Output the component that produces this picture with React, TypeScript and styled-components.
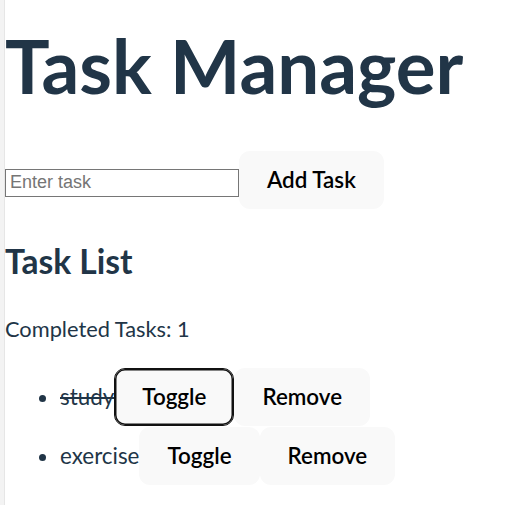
import React, { useState } from "react";
import styled, { createGlobalStyle } from "styled-components";

const GlobalStyle = createGlobalStyle`
  html, body { margin: 0; padding: 0; background: #ffffff; }
  body {
    font-family: Lato, "Open Sans", sans-serif;
    color: #213547;
  }
`;

const Page = styled.div`
  min-height: 100vh;
  box-sizing: border-box;
  border-left: 4px solid #f3f3f3;
  box-shadow: inset 1px 0 0 #e6e6e6;
  padding-left: 1px;
  padding-top: 26px;
`;

const Title = styled.h1`
  margin: 0;
  font-size: 74.5px;
  line-height: 79px;
  font-weight: 700;
  color: #213547;
`;

const Form = styled.div`
  display: flex;
  align-items: baseline;
  margin-top: 46px;
`;

const TaskInput = styled.input`
  box-sizing: border-box;
  width: 234px;
  height: 28px;
  margin: 0;
  padding: 1px 4px;
  border: 1px solid #767676;
  border-radius: 0;
  font-family: "Liberation Sans", Arial, sans-serif;
  font-size: 18px;
  color: #000;
  background: #fff;
  &::placeholder { color: #757575; }
`;

const Button = styled.button<{ $focused?: boolean }>`
  box-sizing: border-box;
  margin: 0;
  padding: 14px 27px;
  border: 1px solid ${(p) => (p.$focused ? "#111" : "transparent")};
  box-shadow: ${(p) => (p.$focused ? "inset 0 0 0 1.5px #111" : "none")};
  border-radius: 11px;
  background: #f9f9f9;
  color: #000;
  font-family: Lato, "Open Sans", sans-serif;
  font-size: 22.4px;
  font-weight: 600;
  line-height: 28px;
  cursor: pointer;
`;

const SubTitle = styled.h2`
  margin: 32px 0 0;
  font-size: 33.6px;
  line-height: 40px;
  font-weight: 700;
  color: #213547;
`;

const Summary = styled.p`
  margin: 31px 0 0;
  font-size: 21.8px;
  line-height: 33.6px;
`;

const List = styled.ul`
  margin: 22px 0 0;
  padding-left: 55px;
  font-size: 22.4px;
  line-height: 33.6px;
`;

const Item = styled.li`
  margin-bottom: 1px;
`;

const Label = styled.span<{ $done?: boolean }>`
  text-decoration: ${(p) => (p.$done ? "line-through" : "none")};
`;

type Task = { text: string; done: boolean };

export default function App() {
  const [tasks] = useState<Task[]>([
    { text: "study", done: true },
    { text: "exercise", done: false },
  ]);
  const completed = tasks.filter((t) => t.done).length;
  return (
    <>
      <GlobalStyle />
      <Page>
        <Title>Task Manager</Title>
        <Form>
          <TaskInput placeholder="Enter task" />
          <Button>Add Task</Button>
        </Form>
        <SubTitle>Task List</SubTitle>
        <Summary>Completed Tasks: {completed}</Summary>
        <List>
          {tasks.map((t, i) => (
            <Item key={t.text}>
              <Label $done={t.done}>{t.text}</Label>
              <Button $focused={i === 0}>Toggle</Button>
              <Button>Remove</Button>
            </Item>
          ))}
        </List>
      </Page>
    </>
  );
}
